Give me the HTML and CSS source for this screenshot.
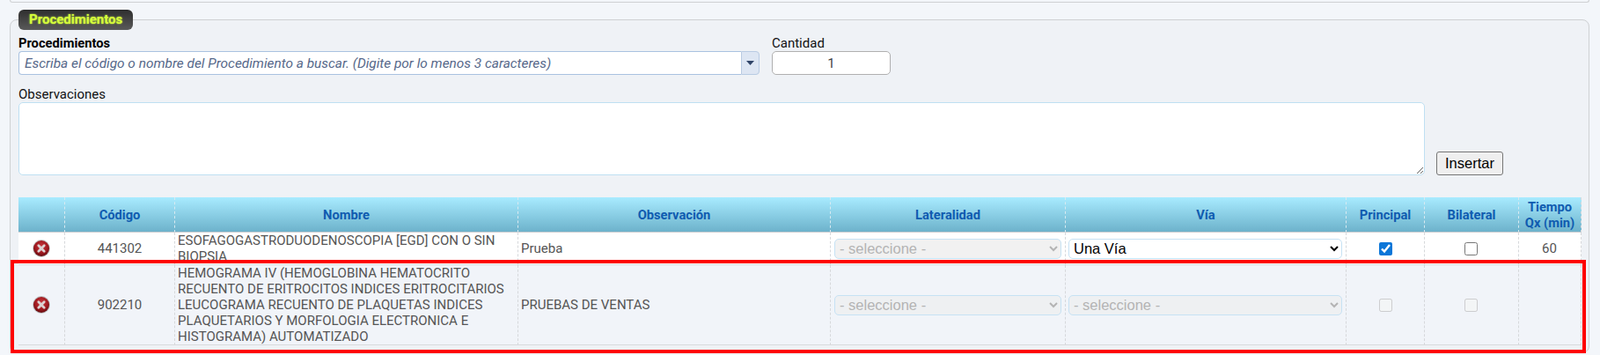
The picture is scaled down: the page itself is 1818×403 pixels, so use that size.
FILE: index.html
```html
<!DOCTYPE html>
<html lang="es">
<head>
<meta charset="utf-8">
<title>Procedimientos</title>
<link rel="stylesheet" href="styles.css">
</head>
<body>
<div class="prev-panel"></div>
<fieldset class="panel">
  <legend class="panel-title">Procedimientos</legend>
  <div class="top-row">
    <div class="field-main">
      <label class="lbl lbl-strong">Procedimientos</label>
      <div class="combo">
        <input class="combo-input" type="text" placeholder="Escriba el código o nombre del Procedimiento a buscar. (Digite por lo menos 3 caracteres)">
        <span class="combo-btn"><svg width="9" height="5" viewBox="0 0 9 5"><path d="M0 0h9L4.500 5z" fill="#2f4468"/></svg></span>
      </div>
    </div>
    <div class="field-qty">
      <label class="lbl">Cantidad</label>
      <input class="qty" type="text" value="1">
    </div>
  </div>
  <label class="lbl lbl-obs">Observaciones</label>
  <div class="obs-row">
    <textarea class="obs"></textarea>
    <button class="insert" type="button">Insertar</button>
  </div>
  <div class="table-wrap">
    <table class="grid">
      <colgroup>
        <col class="c-del"><col class="c-code"><col class="c-name"><col class="c-obs"><col class="c-lat"><col class="c-via"><col class="c-pri"><col class="c-bil"><col class="c-time">
      </colgroup>
      <thead>
        <tr>
          <th></th><th>Código</th><th>Nombre</th><th>Observación</th><th>Lateralidad</th><th>Vía</th><th>Principal</th><th>Bilateral</th><th>Tiempo<br>Qx (min)</th>
        </tr>
      </thead>
      <tbody>
        <tr class="row-a">
          <td class="ctr"><svg class="del" width="20" height="20" viewBox="0 0 20 20"><use href="#del-icon"/></svg></td>
          <td class="ctr">441302</td>
          <td class="clip">ESOFAGOGASTRODUODENOSCOPIA [EGD] CON O SIN BIOPSIA</td>
          <td>Prueba</td>
          <td class="ctr"><select class="sel" disabled><option>- seleccione -</option></select></td>
          <td class="ctr"><select class="sel sel-via"><option>Una Vía</option></select></td>
          <td class="ctr"><input class="chk" type="checkbox" checked></td>
          <td class="ctr pad-r"><input class="chk" type="checkbox"></td>
          <td class="ctr pad-r">60</td>
        </tr>
        <tr class="row-b">
          <td class="ctr"><svg class="del" width="20" height="20" viewBox="0 0 20 20"><use href="#del-icon"/></svg></td>
          <td class="ctr">902210</td>
          <td>HEMOGRAMA IV (HEMOGLOBINA HEMATOCRITO RECUENTO DE ERITROCITOS INDICES ERITROCITARIOS LEUCOGRAMA RECUENTO DE PLAQUETAS INDICES PLAQUETARIOS Y MORFOLOGIA ELECTRONICA E HISTOGRAMA) AUTOMATIZADO</td>
          <td>PRUEBAS DE VENTAS</td>
          <td class="ctr"><select class="sel" disabled><option>- seleccione -</option></select></td>
          <td class="ctr"><select class="sel sel-via" disabled><option>- seleccione -</option></select></td>
          <td class="ctr"><input class="chk" type="checkbox" disabled></td>
          <td class="ctr pad-r"><input class="chk" type="checkbox" disabled></td>
          <td class="ctr"></td>
        </tr>
      </tbody>
    </table>
    <div class="highlight"></div>
  </div>
</fieldset>
<svg class="defs" width="0" height="0">
  <defs>
    <radialGradient id="del-grad" cx="50%" cy="38%" r="65%">
      <stop offset="0" stop-color="#c93a40"/>
      <stop offset="0.6" stop-color="#a11a20"/>
      <stop offset="1" stop-color="#5e0a0e"/>
    </radialGradient>
    <g id="del-icon">
      <circle cx="10" cy="10" r="9.900" fill="#8c8c8c" opacity="0.5"/>
      <circle cx="10" cy="10" r="9" fill="url(#del-grad)"/>
      <path d="M6.800 6.800l6.400 6.400M13.200 6.800l-6.400 6.400" stroke="#dcd2d2" stroke-width="2.800" stroke-linecap="round"/>
    </g>
  </defs>
</svg>
</body>
</html>
```
FILE: styles.css
```css
* { box-sizing: border-box; }
html, body { margin: 0; padding: 0; }
body {
  background: #f3f6fa;
  padding: 0 12px 0 11px;
  font-family: Roboto, "Liberation Sans", sans-serif;
  font-size: 15px;
  color: #111;
  height: 403px;
  overflow: hidden;
}
.prev-panel {
  height: 3px;
  border: 1px solid #cfd1d3;
  border-top: 0;
  border-radius: 0 0 6px 6px;
  margin-bottom: 8px;
}
.panel {
  margin: 0;
  padding: 0 8px 8px 9px;
  border: 1px solid #cfd1d3;
  border-radius: 8px;
  background: #eff2f6;
  min-width: 0;
}
.panel-title {
  width: 130px;
  height: 23px;
  padding: 0 0 0 12px;
  font-weight: 700;
  font-size: 15px;
  line-height: 22px;
  color: #d6ff3a;
  border-radius: 6px;
  background: linear-gradient(#2e2e2e, #5a5a5a);
  text-shadow: 0 0 2px #c8f040;
}
.top-row { display: flex; gap: 14px; padding-top: 7px; }
.field-main { width: 842px; }
.field-qty { width: 135px; }
.lbl { display: block; height: 17px; line-height: 17px; font-size: 15px; color: #111; }
.lbl-strong { font-weight: 700; font-size: 14.700px; color: #000; }
.lbl-obs { margin-top: 14px; }
.combo { display: flex; height: 27px; }
.combo-input {
  flex: 1;
  min-width: 0;
  height: 27px;
  padding: 0 6px;
  border: 1px solid #a9c2e0;
  border-right: 0;
  border-radius: 4px 0 0 4px;
  background: #fff;
  font: italic 15.400px Roboto, sans-serif;
  outline: none;
}
.combo-input::placeholder { color: #56688a; opacity: 1; }
.combo-btn {
  width: 21px;
  display: flex;
  align-items: center;
  justify-content: center;
  border: 1px solid #b8cbe3;
  border-radius: 0 4px 4px 0;
  background: #dde6f3;
}
.qty {
  display: block;
  width: 135px;
  height: 27px;
  border: 1px solid #b0b0b0;
  border-radius: 5px;
  background: #fff;
  text-align: center;
  font: 15px Roboto, sans-serif;
  color: #444;
  outline: none;
}
.obs-row { display: flex; align-items: flex-end; gap: 13px; }
.obs {
  display: block;
  width: 1598px;
  height: 83px;
  border: 1px solid #bfe0f2;
  border-radius: 5px;
  background: #fff;
  outline: none;
}
.insert {
  width: 76px;
  height: 27px;
  padding: 0;
  border: 1px solid #767676;
  border-radius: 3px;
  background: #efefef;
  font: 16.500px "Liberation Sans", sans-serif;
  color: #000;
}
.table-wrap { position: relative; margin-top: 25px; }
.grid {
  width: 1776px;
  table-layout: fixed;
  border-collapse: separate;
  border-spacing: 0;
}
.c-del { width: 53px; }
.c-code { width: 125px; }
.c-name { width: 390px; }
.c-obs { width: 355px; }
.c-lat { width: 267px; }
.c-via { width: 319px; }
.c-pri { width: 89px; }
.c-bil { width: 107px; }
.c-time { width: 71px; }
.grid th {
  height: 40px;
  padding: 0;
  font-size: 14.700px;
  line-height: 18px;
  font-weight: 700;
  color: #0f5bb0;
  text-align: center;
  background: linear-gradient(#a8ebff, #6db2cb);
  border-bottom: 1px solid #c9ccd0;
  border-right: 1px dashed #d9eaf1;
}
.grid td {
  padding: 0 0 0 3px;
  font-size: 15px;
  line-height: 18px;
  color: #555;
  vertical-align: middle;
  border-right: 1px dashed #d6d8db;
  border-bottom: 1px solid #d8dadd;
}
.grid th:last-child, .grid td:last-child { border-right: 1px dashed #d6d8db; }
.grid td.ctr { padding: 0; text-align: center; }
.grid td.pad-r { padding-right: 1px; }
.row-a td { background: #fff; height: 37px; }
.row-b td { background: #f1f4f9; height: 91px; }
.row-a td.clip { vertical-align: top; }
.del { display: block; margin: 0 auto; }
.sel {
  display: block;
  margin: 0 auto;
  width: calc(100% - 8px);
  height: 23px;
  border: 1px solid #c6e2f4;
  border-radius: 5px;
  background-color: #fff;
  font: 16.500px "Liberation Sans", sans-serif;
  color: #000;
  padding: 0 0 0 1px;
  outline: none;
}
.sel-via { width: 311px; margin-left: 3px; }
.sel:disabled { background-color: #f1f1f1; color: #b4b4b4; opacity: 1; }
.row-b .sel:disabled { background-color: #eef0f2; }
.chk { display: block; margin: 0 auto; width: 15px; height: 15px; accent-color: #0b76d8; }
.highlight {
  position: absolute;
  top: 71px;
  left: -9px;
  width: 1790px;
  height: 106px;
  border: 4px solid #fe0000;
  pointer-events: none;
}
.defs { position: absolute; }
```
